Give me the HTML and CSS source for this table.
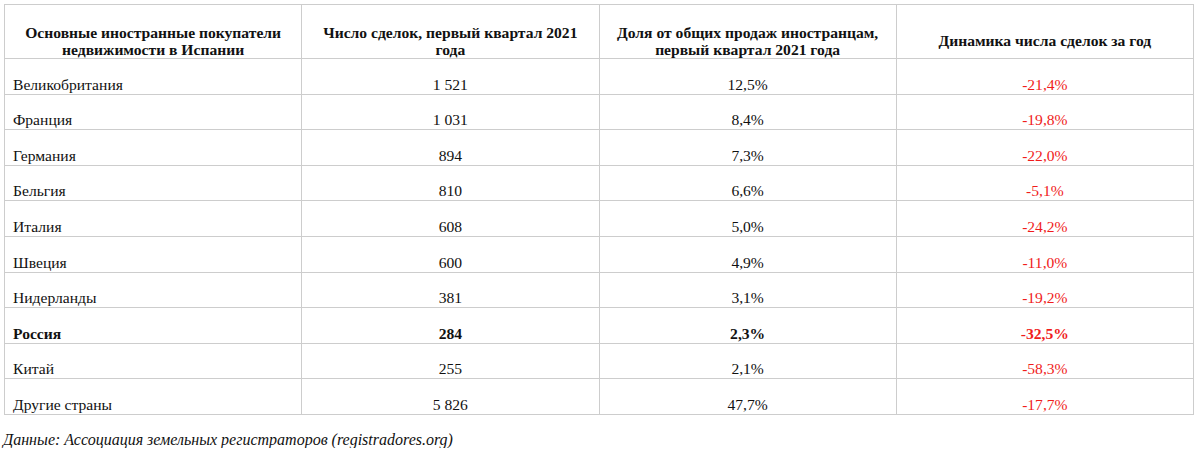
FILE: index.html
```html
<!DOCTYPE html>
<html lang="ru">
<head>
<meta charset="utf-8">
<link rel="stylesheet" href="styles.css">
</head>
<body>
<table class="data">
  <thead>
    <tr>
      <th>Основные иностранные покупатели<br>недвижимости в Испании</th>
      <th>Число сделок, первый квартал 2021<br>года</th>
      <th>Доля от общих продаж иностранцам,<br>первый квартал 2021 года</th>
      <th>Динамика числа сделок за год</th>
    </tr>
  </thead>
  <tbody>
    <tr><td>Великобритания</td><td>1 521</td><td>12,5%</td><td class="neg">-21,4%</td></tr>
    <tr><td>Франция</td><td>1 031</td><td>8,4%</td><td class="neg">-19,8%</td></tr>
    <tr><td>Германия</td><td>894</td><td>7,3%</td><td class="neg">-22,0%</td></tr>
    <tr><td>Бельгия</td><td>810</td><td>6,6%</td><td class="neg">-5,1%</td></tr>
    <tr><td>Италия</td><td>608</td><td>5,0%</td><td class="neg">-24,2%</td></tr>
    <tr><td>Швеция</td><td>600</td><td>4,9%</td><td class="neg">-11,0%</td></tr>
    <tr><td>Нидерланды</td><td>381</td><td>3,1%</td><td class="neg">-19,2%</td></tr>
    <tr class="hl"><td>Россия</td><td>284</td><td>2,3%</td><td class="neg">-32,5%</td></tr>
    <tr><td>Китай</td><td>255</td><td>2,1%</td><td class="neg">-58,3%</td></tr>
    <tr><td>Другие страны</td><td>5 826</td><td>47,7%</td><td class="neg">-17,7%</td></tr>
  </tbody>
</table>
<p class="source">Данные: Ассоциация земельных регистраторов (registradores.org)</p>
</body>
</html>
```

FILE: styles.css
```css
html, body {
  margin: 0;
  padding: 0;
  background: #fff;
}
body {
  padding: 4px 6px 0 4px;
  font-family: "Liberation Serif", "Tinos", "Times New Roman", "DejaVu Serif", serif;
  color: #111;
}
.data {
  width: 1190px;
  border-collapse: collapse;
  table-layout: fixed;
  font-size: 15.6px;
}
.data th,
.data td {
  border: 1px solid #cdcdcd;
  line-height: 17px;
}
.data th {
  font-weight: bold;
  text-align: center;
  vertical-align: middle;
  padding: 18px 4px 0;
  height: 35px;
}
.data tbody tr {
  height: 35.6px;
}
.data td {
  text-align: center;
  vertical-align: bottom;
  padding: 0 8px 1px;
}
.data td:first-child {
  text-align: left;
}
.data .neg {
  color: #f01c1c;
}
.data .hl td {
  font-weight: bold;
}
.source {
  margin: 16px 0 0 -1px;
  font-style: italic;
  font-size: 16px;
  line-height: 17px;
}
```
